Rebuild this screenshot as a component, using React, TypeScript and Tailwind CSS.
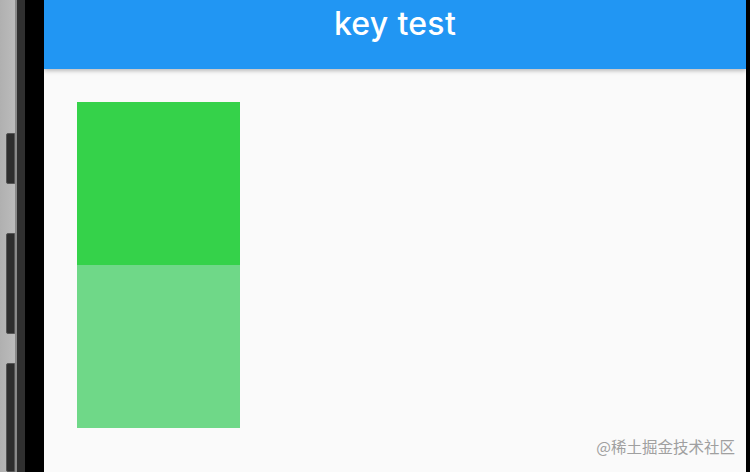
export default function App() {
  return (
    <div className="flex h-[472px] w-[750px] overflow-hidden bg-black font-['Roboto',sans-serif]">
      {/* phone frame, left side */}
      <div className="flex h-full w-[44px] shrink-0">
        <div className="flex h-full w-[15px] flex-col bg-gradient-to-r from-[#b0b0b0] to-[#bcbcbc] pl-[6px]">
          <div className="mt-[133px] h-[56px] w-[9px] rounded-l-[2px] border border-[#555] bg-[#2e2e2e]" />
          <div className="mt-[49px] h-[110px] w-[9px] rounded-l-[2px] border border-[#555] bg-[#2e2e2e]" />
          <div className="mt-[29px] h-[120px] w-[9px] rounded-l-[2px] border border-[#555] bg-[#2e2e2e]" />
        </div>
        <div className="h-full w-[2px] bg-[#8a8a8a]" />
        <div className="h-full w-[8px] bg-[#303030]" />
        <div className="h-full flex-1 bg-black" />
      </div>

      {/* screen */}
      <div className="flex h-full w-[702px] shrink-0 flex-col bg-[#fafafa]">
        <div className="relative z-10 flex h-[69px] shrink-0 items-center justify-center bg-[#2196f3] shadow-[0_2px_4px_rgba(0,0,0,0.25)]">
          <span className="-mt-[22px] font-['Inter',sans-serif] text-[32px] font-medium tracking-[0.3px] text-white">key test</span>
        </div>
        <div className="flex flex-1 flex-col">
          <div className="ml-[33px] mt-[33px] flex w-[163px] flex-col">
            <div className="h-[163px] bg-[#35d24a]" />
            <div className="h-[163px] bg-[#6fd888]" />
          </div>
          <div className="mr-[11px] mt-auto mb-[14px] self-end font-['Noto_Sans_CJK_SC',sans-serif] text-[15.5px] text-[#a0a0a0]">
            @稀土掘金技术社区
          </div>
        </div>
      </div>

      <div className="h-full flex-1 bg-black" />
    </div>
  );
}
